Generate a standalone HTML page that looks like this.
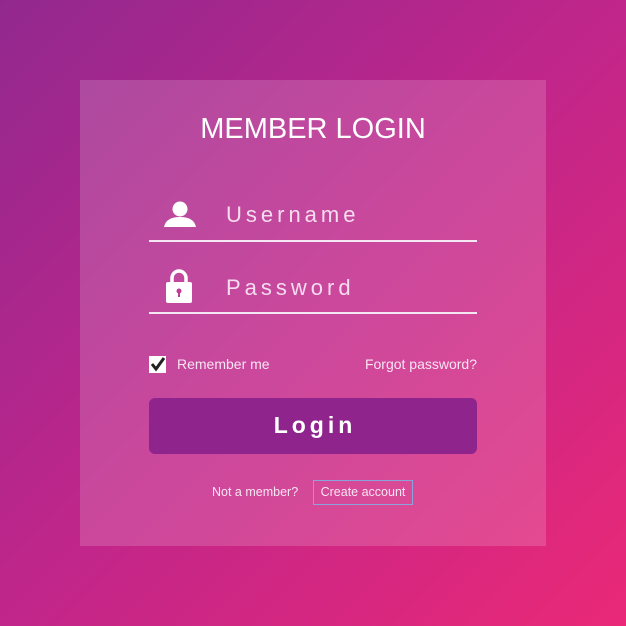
<!DOCTYPE html>
<html><head><style>
*{margin:0;padding:0;box-sizing:border-box}
body{width:626px;height:626px;overflow:hidden;background:linear-gradient(135deg,#92288f 0%,#c1268a 50%,#ea2877 100%);font-family:"Liberation Sans",sans-serif;position:relative;color:#fff}
.panel{position:absolute;left:80px;top:80px;width:466px;height:466px;background:rgba(255,255,255,0.16)}
.t{position:absolute;left:80px;width:466px;top:113px;text-align:center;font-size:29px}
.line{position:absolute;left:149px;width:328px;height:2px;background:#f4e6f2}
.lbl{position:absolute;left:226px;font-size:22px;letter-spacing:4px;color:#f6dcef}
.s{position:absolute;font-size:14px;color:#f8e4f3}
.btn{position:absolute;left:149px;top:398px;width:328px;height:56px;background:#8f258c;border-radius:6px;text-align:center;line-height:54px;font-size:23px;font-weight:bold;letter-spacing:4px;text-indent:4px}
.cb{position:absolute;left:149px;top:356px;width:17px;height:17px;background:#fff}
.ca{position:absolute;left:313px;top:480px;width:100px;height:25px;border:1px solid #8ca2dc;font-size:12.5px;color:#f8e4f3;text-align:center;line-height:23px}
</style></head><body>
<div class="panel"></div>
<div class="t">MEMBER LOGIN</div>
<svg style="position:absolute;left:162px;top:201px" width="36" height="28" viewBox="0 0 36 28"><circle cx="18" cy="8" r="7.5" fill="#fff"/><path d="M2 26 Q4 16 18 16 Q32 16 34 26 Z" fill="#fff"/></svg>
<div class="lbl" style="top:202px">Username</div>
<div class="line" style="top:240px"></div>
<svg style="position:absolute;left:164px;top:268px" width="30" height="36" viewBox="0 0 30 36"><path d="M8 15 V10 A7 7 0 0 1 22 10 V15" fill="none" stroke="#fff" stroke-width="3.5"/><rect x="2" y="14" width="26" height="21" rx="2" fill="#fff"/><circle cx="15" cy="23" r="2.5" fill="#c03d95"/><rect x="14" y="23" width="2" height="6" fill="#c03d95"/></svg>
<div class="lbl" style="top:275px">Password</div>
<div class="line" style="top:312px"></div>
<div class="cb"></div>
<svg style="position:absolute;left:149px;top:355px" width="18" height="18" viewBox="0 0 18 18"><path d="M3 9 L7 14 L15 3" fill="none" stroke="#222" stroke-width="3"/></svg>
<div class="s" style="left:177px;top:356px">Remember me</div>
<div class="s" style="right:149px;top:356px">Forgot password?</div>
<div class="btn">Login</div>
<div class="s" style="left:212px;top:485px;font-size:12.5px">Not a member?</div>
<div class="ca">Create account</div>
</body></html>
